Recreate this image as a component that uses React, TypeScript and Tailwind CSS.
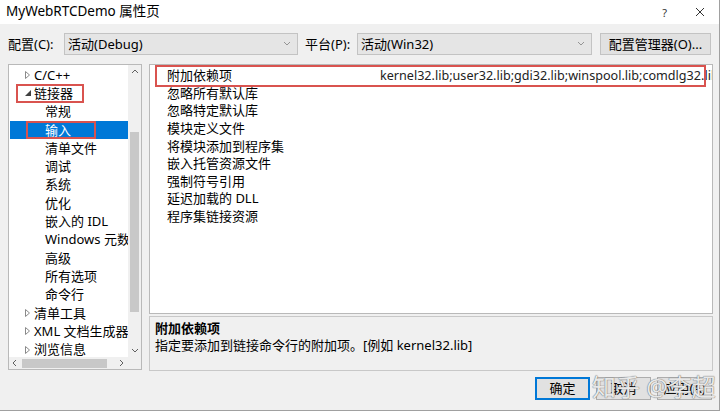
import React from "react";

const treeItems: { label: string; level: 0 | 1; state?: "open" | "closed"; selected?: boolean; mark?: boolean }[] = [
  { label: "C/C++", level: 0, state: "closed" },
  { label: "链接器", level: 0, state: "open", mark: true },
  { label: "常规", level: 1 },
  { label: "输入", level: 1, selected: true, mark: true },
  { label: "清单文件", level: 1 },
  { label: "调试", level: 1 },
  { label: "系统", level: 1 },
  { label: "优化", level: 1 },
  { label: "嵌入的 IDL", level: 1 },
  { label: "Windows 元数据", level: 1 },
  { label: "高级", level: 1 },
  { label: "所有选项", level: 1 },
  { label: "命令行", level: 1 },
  { label: "清单工具", level: 0, state: "closed" },
  { label: "XML 文档生成器", level: 0, state: "closed" },
  { label: "浏览信息", level: 0, state: "closed" },
];

const props = [
  { name: "附加依赖项", value: "kernel32.lib;user32.lib;gdi32.lib;winspool.lib;comdlg32.lib;advapi32.lib" },
  { name: "忽略所有默认库", value: "" },
  { name: "忽略特定默认库", value: "" },
  { name: "模块定义文件", value: "" },
  { name: "将模块添加到程序集", value: "" },
  { name: "嵌入托管资源文件", value: "" },
  { name: "强制符号引用", value: "" },
  { name: "延迟加载的 DLL", value: "" },
  { name: "程序集链接资源", value: "" },
];

const Chevron = ({ dir, className = "" }: { dir: "up" | "down" | "left" | "right"; className?: string }) => {
  const d = {
    up: "M1 5 L4 2 L7 5",
    down: "M1 2 L4 5 L7 2",
    left: "M5 1 L2 4 L5 7",
    right: "M2 1 L5 4 L2 7",
  }[dir];
  return (
    <svg width="8" height="8" viewBox="0 0 8 8" className={className}>
      <path d={d} fill="none" stroke="#606060" strokeWidth="1" />
    </svg>
  );
};

const Combo = ({ text, w }: { text: string; w: string }) => (
  <div className={`${w} h-[22px] bg-[#e5e5e5] border border-[#c3c3c3] flex items-center pl-[3px] pr-[6px]`}>
    <span className="flex-1 text-[13px]">{text}</span>
    <Chevron dir="down" className="opacity-60" />
  </div>
);

export default function App() {
  return (
    <div className="w-[720px] h-[411px] bg-[#f0f0f0] flex flex-col font-['Noto_Sans','Noto_Sans_CJK_SC',sans-serif] text-[13px] leading-none text-black border-r border-b border-[#a0a0a0] overflow-hidden relative">
      {/* Title bar */}
      <div className="h-[24px] bg-white flex items-center pl-[6px] pr-[14px] shrink-0">
        <span className="flex-1 text-[13.5px]">MyWebRTCDemo 属性页</span>
        <span className="text-[11px] text-[#333] mr-[28px]">?</span>
        <svg width="10" height="10" viewBox="0 0 10 10">
          <path d="M1 1 L9 9 M9 1 L1 9" stroke="#333" strokeWidth="1" />
        </svg>
      </div>

      {/* Config row */}
      <div className="flex items-center mt-[9px] h-[22px] shrink-0">
        <span className="w-[64px] pl-[8px]">配置(C):</span>
        <Combo text="活动(Debug)" w="w-[234px]" />
        <span className="w-[52px] ml-[7px]">平台(P):</span>
        <Combo text="活动(Win32)" w="w-[235px]" />
        <button className="ml-[8px] w-[111px] h-[22px] bg-[#e1e1e1] border border-[#c3c3c3] text-[13px]">
          配置管理器(O)...
        </button>
      </div>

      {/* Main area */}
      <div className="flex mt-[9px] pl-[8px] h-[307px] shrink-0">
        {/* Tree */}
        <div className="w-[134px] h-[306px] border border-[#b9b9b9] bg-white flex flex-col">
          <div className="flex h-[292px]">
            <div className="w-[119px] overflow-hidden pt-[1px] pl-[1px]">
              {treeItems.map((it) => (
                <div
                  key={it.label}
                  className={`h-[18.3px] flex items-center whitespace-nowrap ${it.selected ? "bg-[#0078d7] text-white" : ""}`}
                >
                  {it.level === 0 ? (
                    <span
                      className={`flex items-center h-full ml-[6px] pl-[9px] ${it.mark ? "outline-2 outline-[#d9534f] -outline-offset-2 pr-[11px]" : ""}`}
                    >
                      <span className="w-[9px] flex items-center">
                        {it.state === "closed" ? (
                          <svg width="5" height="8" viewBox="0 0 5 8">
                            <path d="M0.5 0.5 L4.5 4 L0.5 7.5 Z" fill="none" stroke="#8a8a8a" strokeWidth="1" />
                          </svg>
                        ) : (
                          <svg width="6" height="6" viewBox="0 0 6 6">
                            <path d="M6 0 L6 6 L0 6 Z" fill="#404040" />
                          </svg>
                        )}
                      </span>
                      <span className="text-[13px]">{it.label}</span>
                    </span>
                  ) : (
                    <span
                      className={`flex items-center h-full ${it.mark ? "outline-2 outline-[#d9534f] -outline-offset-2 ml-[16px] pl-[19px] pr-[25px]" : "pl-[35px]"}`}
                    >
                      <span className="text-[13px]">{it.label}</span>
                    </span>
                  )}
                </div>
              ))}
            </div>
            <div className="w-[13px] bg-[#f0f0f0] flex flex-col items-center">
              <Chevron dir="up" className="mt-[3px]" />
              <div className="w-[9px] bg-[#c8c8c8] mt-[56px] h-[180px]" />
              <div className="flex-1" />
              <Chevron dir="down" className="mb-[2px]" />
            </div>
          </div>
          <div className="flex h-[12px] bg-[#f0f0f0] items-center">
            <Chevron dir="left" className="ml-[2px]" />
            <div className="ml-[3px] w-[85px] h-[9px] bg-[#c8c8c8]" />
            <div className="flex-1" />
            <Chevron dir="right" className="mr-[15px]" />
          </div>
        </div>

        {/* Right side */}
        <div className="ml-[7px] w-[564px] flex flex-col">
          <div className="h-[251px] border border-[#b9b9b9] bg-white pt-[2px] overflow-hidden">
            {props.map((p, i) => (
              <div key={p.name} className="relative h-[17.6px] flex items-center whitespace-nowrap">
                <span className="w-[230px] shrink-0 pl-[17px] text-[13px]">{p.name}</span>
                <span className="text-[12.6px] text-[#222]">{p.value}</span>
                {i === 0 && (
                  <span className="absolute left-[5px] right-[6px] -top-[2px] -bottom-[2px] border-2 border-[#d9534f]" />
                )}
              </div>
            ))}
          </div>
          <div className="mt-[2px] h-[55px] border border-[#c8c8c8] bg-[#f0f0f0] pl-[5px] pt-[3px] leading-[17px]">
            <div className="font-bold text-[13px]">附加依赖项</div>
            <div className="text-[13px]">指定要添加到链接命令行的附加项。[例如 kernel32.lib]</div>
          </div>
        </div>
      </div>

      {/* Buttons */}
      <div className="flex justify-end gap-[6px] pr-[7px] mt-[6px]">
        <button className="w-[55px] h-[23px] bg-[#e1e1e1] border border-[#0078d7] shadow-[inset_0_0_0_1px_#0078d7] text-[13px]">确定</button>
        <button className="w-[55px] h-[23px] bg-[#e1e1e1] border border-[#adadad] text-[13px]">取消</button>
        <button className="w-[55px] h-[23px] bg-[#e1e1e1] border border-[#adadad] text-[13px]">应用(A)</button>
      </div>

      {/* Watermark */}
      <span className="absolute left-[592px] top-[375px] text-[24px] text-[#fafafa]/90 [text-shadow:0_0_1px_#6e6e6e,0_0_1px_#6e6e6e] pointer-events-none">
        知乎 @李超
      </span>
    </div>
  );
}
